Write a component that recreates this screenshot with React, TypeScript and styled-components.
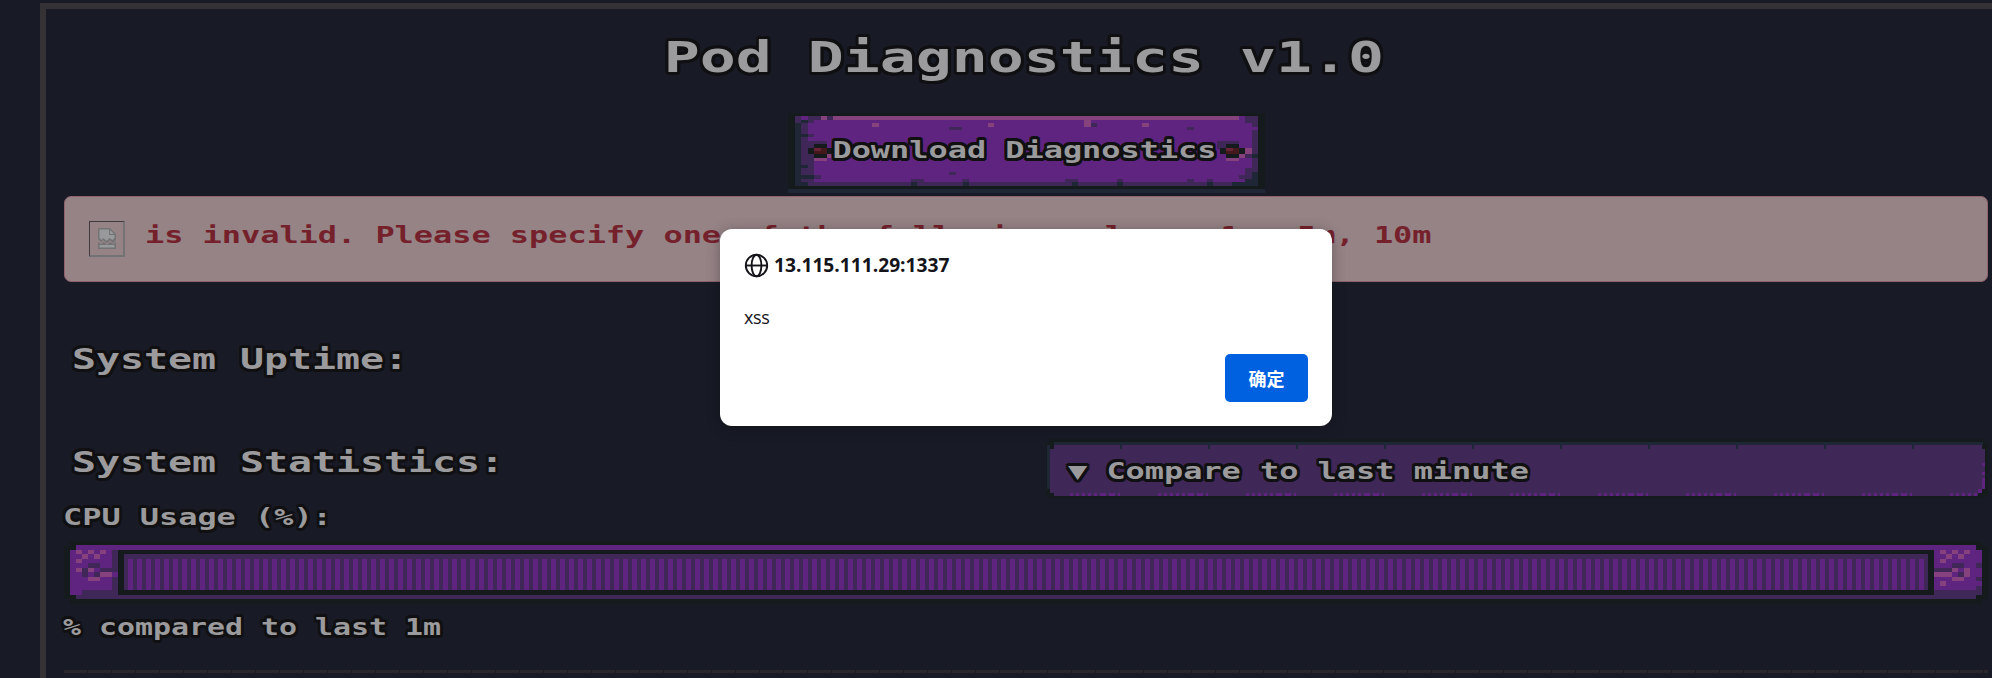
import React from "react";
import styled, { createGlobalStyle } from "styled-components";

const color = {
  page: "#181b26",
  frame: "#353236",
  text: "#9b9a9c",
  outline: "#101012",
  violet: "#5f2480",
  plum: "#3f2758",
  pink: "#86427c",
  slate: "#1f2737",
  moss: "#151b1c",
  blood: "#6b2138",
  rust: "#43191c",
};

const GlobalStyle = createGlobalStyle`
  * { box-sizing: border-box; }
  body { margin: 0; background: ${color.page}; overflow: hidden; }
`;

const Page = styled.div`
  width: 1992px;
  height: 678px;
  padding: 3px 0 0 40px;
  overflow: hidden;
  background: ${color.page};
`;

const Frame = styled.main`
  display: flex;
  flex-direction: column;
  height: 700px;
  padding: 0 4px 0 18px;
  border: solid ${color.frame};
  border-width: 6px 0 0 6px;
`;

/* Wide bitmap-style lettering; $advance is the width of one character cell. */
const Lettering = styled.span<{ $size: number; $advance: number; $plain?: boolean; $center?: boolean }>`
  display: inline-block;
  white-space: pre;
  font-family: "DejaVu Sans Mono", monospace;
  font-weight: 700;
  font-size: ${(p) => p.$size}px;
  line-height: 40px;
  color: ${(p) => (p.$plain ? "#75212c" : color.text)};
  transform: scaleX(${(p) => p.$advance / (p.$size * 0.602)});
  transform-origin: ${(p) => (p.$center ? "center" : "left")};
  text-shadow: ${(p) =>
    p.$plain
      ? "none"
      : [
          [-2, 0], [2, 0], [0, -3], [0, 3], [-2, -2], [2, -2], [-2, 2], [2, 2], [-1, -3], [1, -3], [-1, 3], [1, 3],
        ]
          .map(([x, y]) => `${x}px ${y}px 0 ${color.outline}`)
          .join(",")};
`;

const TitleRow = styled.h1`
  display: flex;
  justify-content: center;
  height: 104px;
  margin: 0;
  padding: 29px 5px 0 0;
`;

const DownloadButton = styled.button`
  display: grid;
  place-items: center;
  align-self: center;
  width: 477px;
  height: 80px;
  margin: 0 0 3px;
  padding: 0;
  border: 0;
  background: none;
  > * { grid-area: 1 / 1; }
  > svg { align-self: start; height: 80px; }
  > span { margin: 0 4px 7px 0; }
`;

const Alert = styled.section`
  display: flex;
  align-items: flex-start;
  flex: none;
  height: 86px;
  padding: 18px 24px;
  border: 1px solid #8f626d;
  border-radius: 7px;
  background: #968386;
  ${Lettering} { margin-left: 20px; }
`;

const BrokenImage = styled.span`
  display: grid;
  place-items: center;
  flex: none;
  width: 36px;
  height: 36px;
  margin-top: 6px;
  border: solid;
  border-width: 1px 2px 2px 1px;
  border-color: #3e3a3d #737375 #737375 #3e3a3d;
`;

const SectionHeading = styled.h2<{ $top?: number; $inset?: number }>`
  height: 100px;
  margin: ${(p) => p.$top ?? 0}px 0 0;
  padding: ${(p) => p.$inset ?? 0}px 0 0 8px;
`;

const Columns = styled.div`
  display: grid;
  grid-template-columns: 981px 1fr;
  height: 58px;
`;

const Select = styled.div`
  display: grid;
  align-items: start;
  > * { grid-area: 1 / 1; }
  > div { padding: 12px 0 0 23px; }
`;

const Label = styled.div<{ $inset?: number }>`
  height: 44px;
  flex: none;
  padding-top: ${(p) => p.$inset ?? 0}px;
  margin-left: -1px;
`;

const Divider = styled.hr`
  width: 100%;
  height: 3px;
  margin: 22px 0 0;
  border: 0;
  flex: none;
  background: repeating-linear-gradient(90deg, #29272c 0 23px, #1b1c26 23px 24px);
`;

const Dialog = styled.div`
  position: absolute;
  left: 720px;
  top: 229px;
  display: flex;
  flex-direction: column;
  width: 612px;
  height: 197px;
  padding: 22px 24px 24px;
  border-radius: 12px;
  background: #fff;
  box-shadow: 0 2px 14px rgba(0, 0, 0, 0.3);
  color: #15141a;
  font-family: "Open Sans", "Noto Sans CJK SC", sans-serif;
`;

const Origin = styled.div`
  display: flex;
  align-items: center;
  gap: 5px;
  height: 28px;
  font-size: 19.2px;
  line-height: 24px;
  font-weight: 700;
  > svg { margin-top: 1px; }
`;

const Message = styled.div`
  margin-top: 26px;
  font-size: 18px;
  line-height: 24px;
  letter-spacing: -0.4px;
`;

const Confirm = styled.button`
  align-self: flex-end;
  width: 83px;
  height: 48px;
  margin-top: 25px;
  padding: 0;
  border: 0;
  border-radius: 5px;
  background: #0061e0;
  color: #fff;
  font: 700 18px "Noto Sans CJK SC", sans-serif;
`;

type Cell = [string, number, number, number, number];

const { violet: V, plum: D, pink: P, slate: S, moss: M, blood: B, rust: R } = color;

const buttonCells: Cell[] = [
  [M, 0, 0, 477, 76], [S, 0, 76, 477, 4], [V, 7, 3, 463, 70],
  [S, 7, 10, 6, 63], [D, 7, 3, 6, 7], [D, 20, 3, 13, 4], [P, 33, 3, 6, 4], [D, 39, 3, 6, 4], [P, 45, 3, 406, 4],
  [D, 13, 7, 7, 66], [S, 13, 7, 7, 3], [D, 20, 7, 6, 3], [S, 13, 21, 7, 3], [D, 20, 21, 6, 3],
  [D, 20, 28, 6, 45], [D, 26, 28, 13, 3], [M, 26, 31, 13, 14], [M, 20, 35, 25, 6],
  [B, 26, 35, 7, 3], [R, 33, 35, 6, 3], [R, 26, 38, 13, 3], [P, 39, 41, 4, 4], [P, 26, 45, 13, 3],
  [S, 13, 52, 7, 3], [S, 13, 62, 13, 4], [D, 26, 62, 7, 4],
  [D, 20, 69, 431, 4], [S, 13, 69, 7, 4],
  [D, 123, 66, 13, 3], [S, 123, 69, 6, 4], [D, 174, 66, 7, 3], [S, 175, 69, 6, 4],
  [P, 84, 10, 7, 4], [D, 161, 14, 13, 3], [P, 200, 10, 6, 4], [D, 161, 59, 7, 3],
  [P, 296, 7, 7, 7], [D, 303, 10, 6, 4], [P, 354, 10, 7, 4], [D, 399, 14, 7, 3],
  [D, 457, 3, 13, 7], [D, 464, 10, 6, 4], [D, 464, 17, 6, 42], [S, 464, 41, 6, 4],
  [D, 457, 55, 7, 11], [S, 464, 59, 6, 14], [D, 451, 62, 6, 4], [S, 457, 66, 13, 7], [S, 444, 69, 26, 4],
  [D, 277, 66, 13, 3], [S, 284, 69, 6, 4], [D, 329, 66, 6, 3], [S, 329, 69, 6, 4],
  [D, 399, 66, 7, 3], [D, 419, 66, 6, 3], [S, 419, 69, 6, 4],
  [D, 429, 28, 22, 8], [M, 438, 31, 13, 14], [M, 432, 35, 25, 6],
  [B, 438, 35, 7, 3], [R, 445, 35, 6, 3], [R, 438, 38, 13, 3],
  [P, 457, 35, 7, 6], [P, 451, 41, 6, 4], [D, 457, 41, 7, 4], [P, 438, 45, 13, 3],
];

const selectCells: Cell[] = [
  [M, 4, 0, 936, 3], [M, 1, 3, 942, 53], [M, 4, 56, 936, 3],
  [S, 9, 3, 929, 3], [S, 2, 6, 3, 44],
  [D, 9, 6, 928, 51], [D, 5, 10, 935, 44], [M, 5, 6, 4, 4],
  ...Array.from({ length: 10 }, (_, i): Cell => [S, 75 + i * 88, 6, 2, 4]),
  ...Array.from({ length: 11 }, (_, i) => i * 88).flatMap((x): Cell[] =>
    [[25, 3], [31, 3], [37, 3], [43, 3], [49, 3], [55, 6], [64, 6], [73, 2]]
      .filter(([dx]) => x + dx < 932)
      .map(([dx, w]): Cell => [V, x + dx, 54, w, 3]),
  ),
  [V, 937, 24, 3, 3], [V, 937, 33, 3, 3], [V, 937, 39, 3, 11], [V, 933, 50, 4, 4],
  [M, 937, 50, 4, 4], [M, 933, 54, 8, 3],
];

const barCells: Cell[] = [
  [M, 0, 5, 1924, 53], [M, 6, 0, 1912, 63],
  [V, 12, 4, 1900, 5], [V, 6, 9, 48, 45], [D, 12, 54, 1900, 4], [D, 18, 49, 36, 5], [D, 48, 9, 6, 45],
  [P, 12, 9, 6, 4], [P, 24, 9, 6, 4], [P, 36, 9, 6, 4], [P, 18, 13, 6, 5], [P, 30, 13, 6, 5], [P, 12, 18, 6, 4],
  [D, 24, 22, 12, 5], [P, 12, 27, 6, 4], [P, 24, 27, 6, 4], [D, 18, 27, 6, 9], [D, 36, 27, 12, 4],
  [D, 30, 31, 6, 5], [P, 36, 31, 12, 5], [V, 48, 31, 6, 5], [P, 24, 36, 12, 4],
  [M, 54, 9, 1816, 45], [D, 60, 13, 1804, 36],
  ...Array.from({ length: 200 }, (_, i): Cell => [V, 64 + i * 9, 18, 5, 31]),
  [V, 1870, 9, 48, 45], [D, 1870, 49, 42, 5],
  [P, 1876, 9, 6, 4], [P, 1888, 9, 6, 4], [P, 1900, 9, 6, 4], [P, 1882, 13, 6, 5], [P, 1894, 13, 6, 5],
  [P, 1876, 18, 6, 4], [D, 1888, 22, 12, 5], [D, 1870, 27, 18, 4], [P, 1870, 31, 18, 5], [P, 1888, 27, 6, 4],
  [D, 1894, 31, 6, 5], [P, 1900, 27, 6, 9], [P, 1888, 36, 12, 4], [P, 1876, 40, 6, 5],
  [D, 1912, 22, 6, 5], [D, 1912, 36, 6, 4], [D, 1912, 45, 6, 9],
];

const Sprite = styled.svg`
  display: block;
  flex: none;
  shape-rendering: crispEdges;
`;

function PixelArt({ cells, width, height }: { cells: Cell[]; width: number; height: number }) {
  return (
    <Sprite width={width} height={height}>
      {cells.map(([fill, x, y, w, h], i) => (
        <rect key={i} fill={fill} x={x} y={y} width={w} height={h} />
      ))}
    </Sprite>
  );
}

function Globe() {
  return (
    <svg width="25" height="25" viewBox="0 0 25 25" fill="none" stroke="#15141a" strokeWidth="1.9">
      <circle cx="12.5" cy="12.5" r="10.7" />
      <ellipse cx="12.5" cy="12.5" rx="4.9" ry="10.7" />
      <path d="M2 12.5h21" />
    </svg>
  );
}

export default function App() {
  return (
    <Page>
      <GlobalStyle />
      <Frame>
        <TitleRow>
          <Lettering $size={42.5} $advance={36} $center>Pod Diagnostics v1.0</Lettering>
        </TitleRow>
        <DownloadButton>
          <PixelArt cells={buttonCells} width={477} height={80} />
          <Lettering $size={23.5} $advance={19.2} $center>Download Diagnostics</Lettering>
        </DownloadButton>
        <Alert>
          <BrokenImage>
            <svg width="18" height="21" viewBox="0 0 18 21">
              <path d="M0 0h12l6 6v6l-3 3-3-3-3 3-4-3-2 2-3-3z" fill="#737375" />
              <path d="M1.500 1.500H11v5.500h5.500V10l-2 2-3-2-3 3-3-3-2 2-2-2z" fill="#97999b" />
              <path d="M12 2v4h4z" fill="#97999b" />
              <path d="M0 14l3 2 3-2 3 3 3-3 3 2 3-2v7H0z" fill="#737375" />
              <path d="M1.500 17h15v2.500h-15z" fill="#97999b" />
            </svg>
          </BrokenImage>
          <Lettering $size={23.5} $advance={19.2} $plain>
            is invalid. Please specify one of the following values: 1m, 5m, 10m
          </Lettering>
        </Alert>
        <SectionHeading $top={57}>
          <Lettering $size={29} $advance={24}>System Uptime:</Lettering>
        </SectionHeading>
        <Columns>
          <SectionHeading $inset={3}>
            <Lettering $size={29} $advance={24}>System Statistics:</Lettering>
          </SectionHeading>
          <Select>
            <PixelArt cells={selectCells} width={943} height={60} />
            <div>
              <Lettering $size={23.5} $advance={19.2}>▼ Compare to last minute</Lettering>
            </div>
          </Select>
        </Columns>
        <Label>
          <Lettering $size={23.5} $advance={19.2}>CPU Usage (%):</Lettering>
        </Label>
        <PixelArt cells={barCells} width={1924} height={63} />
        <Label $inset={3}>
          <Lettering $size={23} $advance={18}>% compared to last 1m</Lettering>
        </Label>
        <Divider />
      </Frame>
      <Dialog role="alertdialog">
        <Origin>
          <Globe />
          <span>13.115.111.29:1337</span>
        </Origin>
        <Message>xss</Message>
        <Confirm>确定</Confirm>
      </Dialog>
    </Page>
  );
}
